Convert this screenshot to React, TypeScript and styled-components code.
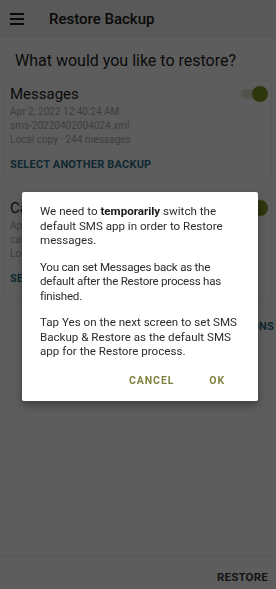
import React from "react";
import styled, { createGlobalStyle } from "styled-components";

const GlobalStyle = createGlobalStyle`
  html, body {
    margin: 0;
    padding: 0;
    background: #fcfcfc;
    font-family: Roboto, "Liberation Sans", sans-serif;
  }
  * { box-sizing: border-box; }
`;

const Screen = styled.div`
  width: 276px;
  height: 100vh;
  display: flex;
  flex-direction: column;
  background: #fcfcfc;
  position: relative;
  overflow: hidden;
`;

const TopBar = styled.div`
  height: 38px;
  flex-shrink: 0;
  display: flex;
  align-items: center;
  padding-left: 10px;
  gap: 25px;
  background: #f0f0f0;
`;

const Burger = styled.div`
  width: 14px;
  display: flex;
  flex-direction: column;
  gap: 3px;
  span {
    display: block;
    height: 2px;
    background: #1c1c1c;
  }
`;

const Title = styled.div`
  font-size: 15px;
  font-weight: 500;
  color: #1a1a1a;
`;

const Heading = styled.div`
  font-size: 16px;
  color: #1e1e1e;
  padding: 13px 15px 10px;
`;

const Card = styled.div`
  margin: 0 4px 10px;
  border: 1px solid #f0f0f0;
  border-radius: 2px;
  padding: 4px 5px 12px;
`;

const CardHead = styled.div`
  display: flex;
  align-items: center;
  justify-content: space-between;
`;

const CardTitle = styled.div`
  font-size: 15px;
  color: #1c1c1c;
`;

const Toggle = styled.div`
  width: 22px;
  height: 10px;
  border-radius: 5px;
  background: #dfe3cf;
  position: relative;
  margin-right: 3px;
  &::after {
    content: "";
    position: absolute;
    right: -5px;
    top: -3px;
    width: 16px;
    height: 16px;
    border-radius: 50%;
    background: #7a9424;
  }
`;

const Meta = styled.div`
  font-size: 10px;
  line-height: 14px;
  color: #a9a9a9;
`;

const MetaBlock = styled.div`
  margin-top: 2px;
`;

const LinkText = styled.div<{ $align?: string }>`
  font-size: 11px;
  font-weight: 700;
  letter-spacing: 0.2px;
  color: #2a6d86;
  margin-top: 11px;
  text-align: ${(p) => p.$align || "left"};
`;

const OptionsRow = styled.div`
  padding: 0 2px 0 4px;
  margin-top: 1px;
`;

const Spacer = styled.div`
  flex: 1;
`;

const BottomBar = styled.div`
  height: 34px;
  flex-shrink: 0;
  border-top: 1px solid #ececec;
  display: flex;
  align-items: flex-end;
  justify-content: flex-end;
  padding: 0 8px 5px 0;
`;

const BottomButton = styled.div`
  font-size: 11.5px;
  font-weight: 700;
  color: #3a3a3a;
  letter-spacing: 0.2px;
`;

const Scrim = styled.div`
  position: fixed;
  inset: 0;
  background: rgba(0, 0, 0, 0.63);
  display: flex;
  align-items: center;
  justify-content: center;
  padding: 4px 0 0 4px;
`;

const Dialog = styled.div`
  width: 236px;
  background: #ffffff;
  border-radius: 2px;
  box-shadow: 0 4px 10px rgba(0, 0, 0, 0.35);
  padding: 12px 0 2px;
`;

const Body = styled.div`
  padding: 0 11px 0 18px;
  font-size: 11.6px;
  line-height: 14.5px;
  color: #2c2c2c;
  b {
    font-weight: 700;
    color: #1a1a1a;
  }
`;

const Para = styled.p<{ $tight?: boolean }>`
  margin: 0 0 12px;
  letter-spacing: ${(p) => (p.$tight ? "-0.25px" : "0")};
  white-space: ${(p) => (p.$tight ? "nowrap" : "normal")};
  &:last-child {
    margin-bottom: 0;
  }
`;

const Actions = styled.div`
  display: flex;
  justify-content: flex-end;
  align-items: center;
  gap: 19px;
  padding: 4px 25px 0 0;
  height: 40px;
`;

const ActionButton = styled.div`
  font-size: 10.5px;
  font-weight: 700;
  letter-spacing: 0.9px;
  color: #7f8440;
  padding: 8px;
`;

export default function App() {
  return (
    <>
      <GlobalStyle />
      <Screen>
        <TopBar>
          <Burger>
            <span />
            <span />
            <span />
          </Burger>
          <Title>Restore Backup</Title>
        </TopBar>
        <Heading>What would you like to restore?</Heading>
        <Card>
          <CardHead>
            <CardTitle>Messages</CardTitle>
            <Toggle />
          </CardHead>
          <MetaBlock>
            <Meta>Apr 2, 2022 12:40:24 AM</Meta>
            <Meta>sms-20220402004024.xml</Meta>
            <Meta>Local copy · 244 messages</Meta>
          </MetaBlock>
          <LinkText>SELECT ANOTHER BACKUP</LinkText>
        </Card>
        <Card>
          <CardHead>
            <CardTitle>Calls</CardTitle>
            <Toggle />
          </CardHead>
          <MetaBlock>
            <Meta>Apr 2, 2022 12:40:24 AM</Meta>
            <Meta>calls-20220402004024.xml</Meta>
            <Meta>Local copy · 58 calls</Meta>
          </MetaBlock>
          <LinkText>SELECT ANOTHER BACKUP</LinkText>
        </Card>
        <OptionsRow>
          <LinkText $align="right">ADVANCED OPTIONS</LinkText>
        </OptionsRow>
        <Spacer />
        <BottomBar>
          <BottomButton>RESTORE</BottomButton>
        </BottomBar>
        <Scrim>
          <Dialog>
            <Body>
              <Para>
                We need to <b>temporarily</b> switch the default SMS app in order to Restore messages.
              </Para>
              <Para $tight>
                You can set Messages back as the
                <br />
                default after the Restore process has
                <br />
                finished.
              </Para>
              <Para>
                Tap Yes on the next screen to set SMS Backup &amp; Restore as the default SMS app for the Restore
                process.
              </Para>
            </Body>
            <Actions>
              <ActionButton>CANCEL</ActionButton>
              <ActionButton>OK</ActionButton>
            </Actions>
          </Dialog>
        </Scrim>
      </Screen>
    </>
  );
}
